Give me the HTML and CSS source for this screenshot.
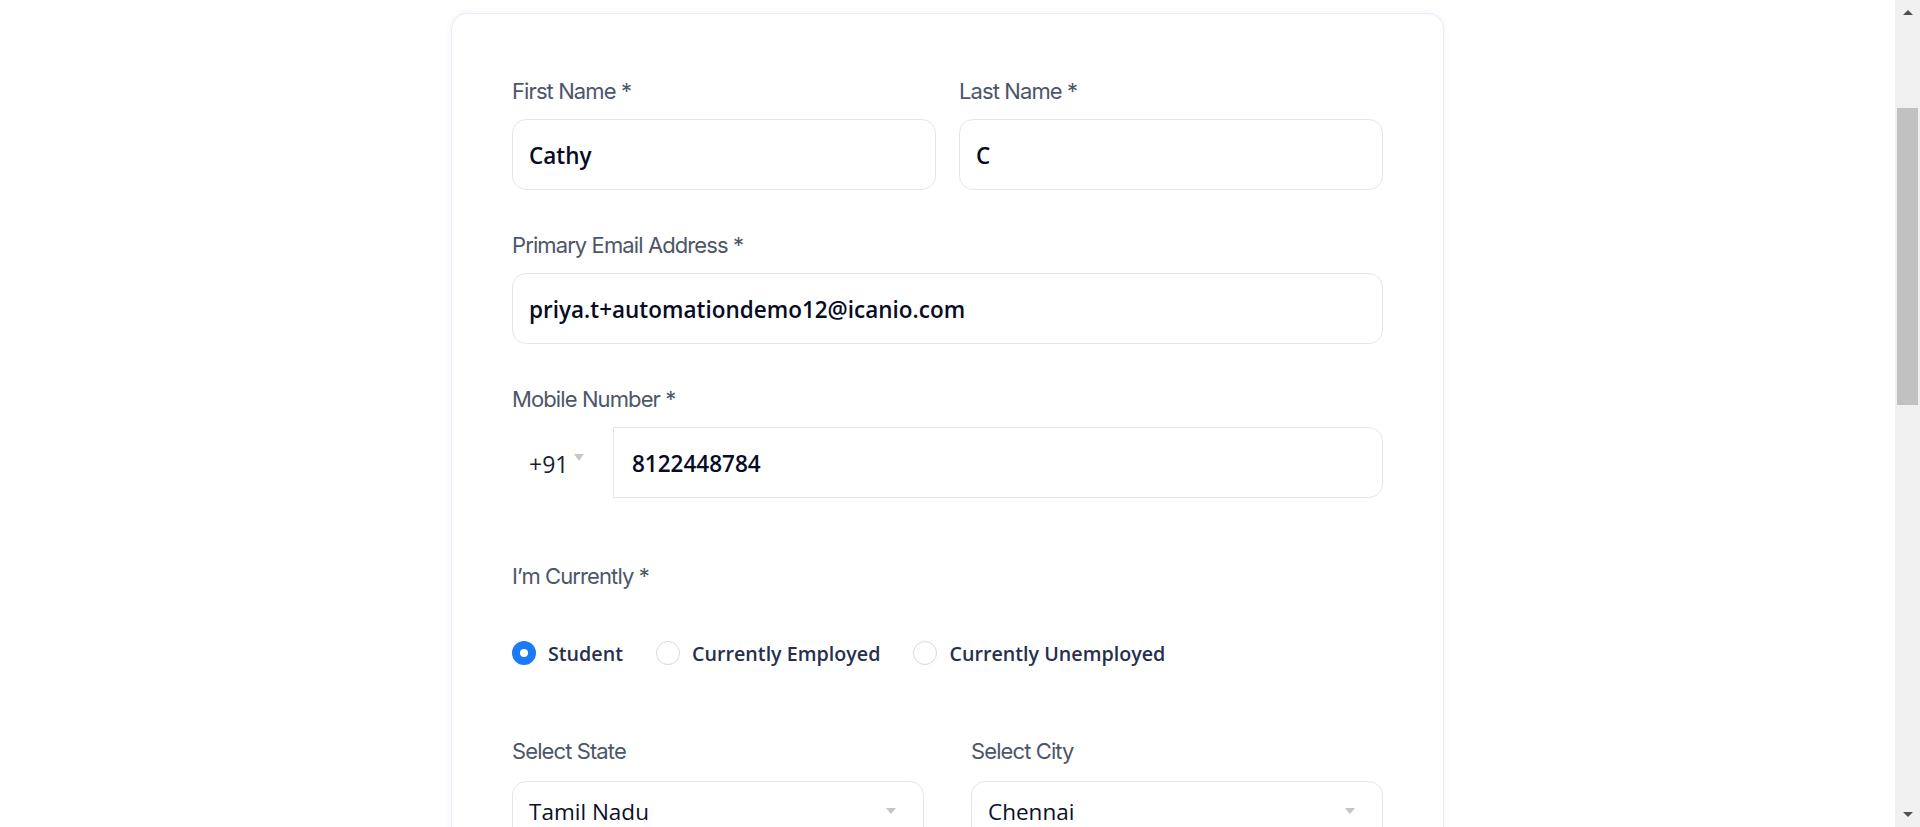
FILE: index.html
```html
<!DOCTYPE html>
<html lang="en">
<head>
<meta charset="utf-8">
<title>Profile form</title>
<link rel="stylesheet" href="styles.css">
</head>
<body>
<div class="viewport">
  <main class="page">
    <section class="card">
      <div class="row row-names">
        <div class="field">
          <div class="label">First Name *</div>
          <div class="input"><span class="value">Cathy</span></div>
        </div>
        <div class="field">
          <div class="label">Last Name *</div>
          <div class="input"><span class="value">C</span></div>
        </div>
      </div>

      <div class="field field-gap">
        <div class="label">Primary Email Address *</div>
        <div class="input"><span class="value">priya.t+automationdemo12@icanio.com</span></div>
      </div>

      <div class="field field-gap">
        <div class="label">Mobile Number *</div>
        <div class="phone">
          <div class="country">
            <span class="country-code">+91</span>
            <span class="mini-caret"></span>
          </div>
          <div class="input phone-input"><span class="value">8122448784</span></div>
        </div>
      </div>

      <div class="field status-field">
        <div class="label">I’m Currently *</div>
        <div class="radios">
          <div class="radio-item">
            <span class="radio checked"></span>
            <span class="radio-text">Student</span>
          </div>
          <div class="radio-item">
            <span class="radio"></span>
            <span class="radio-text">Currently Employed</span>
          </div>
          <div class="radio-item">
            <span class="radio"></span>
            <span class="radio-text">Currently Unemployed</span>
          </div>
        </div>
      </div>

      <div class="row row-location">
        <div class="field">
          <div class="label label-select">Select State</div>
          <div class="input select"><span class="value value-regular">Tamil Nadu</span><span class="select-caret"></span></div>
        </div>
        <div class="field">
          <div class="label label-select">Select City</div>
          <div class="input select"><span class="value value-regular">Chennai</span><span class="select-caret"></span></div>
        </div>
      </div>
    </section>
  </main>
  <div class="scrollbar">
    <div class="sb-button"><span class="sb-arrow-up"></span></div>
    <div class="sb-track"><div class="sb-thumb"></div></div>
    <div class="sb-button"><span class="sb-arrow-down"></span></div>
  </div>
</div>
</body>
</html>
```

FILE: styles.css
```css
* { box-sizing: border-box; }

html, body {
  margin: 0;
  padding: 0;
  height: 100%;
  overflow: hidden;
  background: #ffffff;
}

body {
  font-family: "Inter", "Liberation Sans", sans-serif;
}

.viewport {
  display: flex;
  height: 827px;
}

.page {
  flex: 1;
  overflow: hidden;
  padding-top: 13px;
}

.card {
  width: 993px;
  margin: 0 auto;
  background: #ffffff;
  border: 1px solid #ebebf3;
  border-radius: 16px;
  box-shadow: 0 0 6px rgba(120, 120, 230, 0.10);
  padding: 64px 60px 80px;
  min-height: 1000px;
}

.row {
  display: flex;
}

.row-names { gap: 23px; }
.row-names .field { flex: 0 0 424px; }

.row-location { gap: 47px; margin-top: 73px; }
.row-location .field { flex: 0 0 412px; }

.field { display: flex; flex-direction: column; }
.field-gap { margin-top: 42px; }

.label {
  font-family: "Inter", "Liberation Sans", sans-serif;
  font-size: 22px;
  line-height: 26px;
  font-weight: 400;
  letter-spacing: -0.9px;
  color: #4d5669;
  margin-bottom: 15px;
}

.label-select { margin-bottom: 17px; }

.input {
  height: 71px;
  border: 1px solid #e6e6ea;
  border-radius: 14px;
  background: #ffffff;
  display: flex;
  align-items: center;
  padding: 0 16px;
}

.value {
  font-family: "Open Sans", "Noto Sans", sans-serif;
  font-size: 22.5px;
  font-weight: 600;
  color: #070b26;
  padding-top: 2px;
}

.value-regular {
  font-weight: 400;
  color: #0a0f2a;
  padding-top: 0;
}

.phone {
  display: flex;
  height: 71px;
}

.country {
  flex: 0 0 101px;
  display: flex;
  align-items: center;
  padding-left: 17px;
}

.country-code {
  font-family: "Open Sans", "Noto Sans", sans-serif;
  font-size: 23px;
  font-weight: 400;
  color: #1a1f33;
  padding-top: 2px;
}

.mini-caret {
  width: 0;
  height: 0;
  margin-left: 6px;
  margin-bottom: 10px;
  border-left: 5.5px solid transparent;
  border-right: 5.5px solid transparent;
  border-top: 7px solid #c8c8cc;
}

.phone-input {
  flex: 1;
  border-radius: 0 14px 14px 0;
  padding-left: 18px;
}

.status-field { margin-top: 65px; }
.status-field .label { margin-bottom: 52px; }

.radios {
  display: flex;
  align-items: center;
  height: 24px;
  gap: 33px;
}

.radio-item {
  display: flex;
  align-items: center;
  gap: 12px;
}

.radio {
  width: 24px;
  height: 24px;
  border-radius: 50%;
  border: 1px solid #d9d9de;
  background: #ffffff;
}

.radio.checked {
  border: 8px solid #1c7af4;
  background: #ffffff;
}

.radio-text {
  font-family: "Open Sans", "Noto Sans", sans-serif;
  font-size: 19.7px;
  font-weight: 600;
  color: #26304d;
  padding-top: 1px;
}

.select {
  justify-content: space-between;
  align-items: flex-start;
  padding-top: 14px;
  padding-right: 27px;
}

.select-caret {
  width: 0;
  height: 0;
  margin-top: 12px;
  border-left: 5.5px solid transparent;
  border-right: 5.5px solid transparent;
  border-top: 6px solid #c4c5cc;
}

/* fake scrollbar */
.scrollbar {
  flex: 0 0 25px;
  background: #f0f0f0;
  display: flex;
  flex-direction: column;
}

.sb-button {
  height: 25px;
  display: flex;
  align-items: center;
  justify-content: center;
}

.sb-arrow-up {
  width: 0; height: 0;
  border-left: 5.5px solid transparent;
  border-right: 5.5px solid transparent;
  border-bottom: 5px solid #505050;
}

.sb-arrow-down {
  width: 0; height: 0;
  border-left: 5.5px solid transparent;
  border-right: 5.5px solid transparent;
  border-top: 5px solid #505050;
}

.sb-track {
  flex: 1;
  padding: 83px 2px 0;
}

.sb-thumb {
  height: 297px;
  background: #c1c1c1;
}
```
